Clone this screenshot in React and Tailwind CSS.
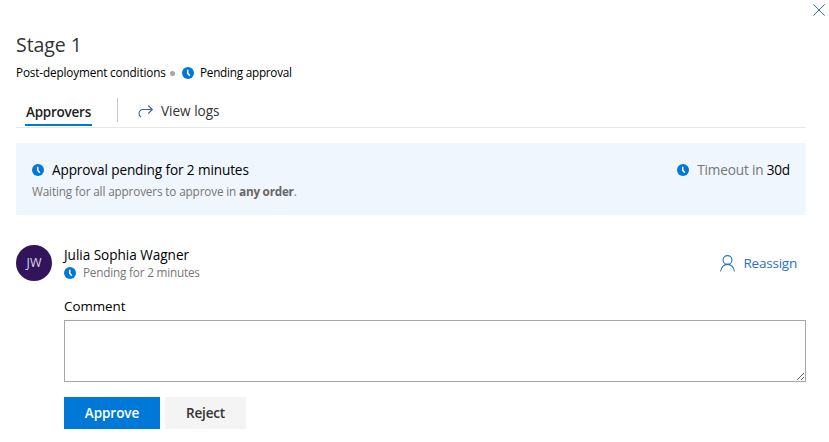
function Clock({ className = "" }) {
  return (
    <svg viewBox="0 0 12 12" className={`h-3 w-3 shrink-0 ${className}`} aria-hidden="true">
      <circle cx="6" cy="6" r="6" fill="#0078d7" />
      <path d="M5.7 2.7v3.5L7.8 8.7" fill="none" stroke="#fff" strokeWidth="1.5" />
    </svg>
  );
}

function CloseIcon() {
  return (
    <svg viewBox="0 0 12 12" className="h-3 w-3" fill="none" stroke="#2672c6" strokeWidth="1" aria-hidden="true">
      <path d="M.3.3l11.4 11.4M11.7.3L.3 11.7" />
    </svg>
  );
}

function ShareIcon() {
  return (
    <svg viewBox="0 0 16 14" className="h-3.5 w-4 shrink-0" fill="none" stroke="#35669b" strokeWidth="1.1" aria-hidden="true">
      <path d="M10.3 1.5l4 4-4 4M14 5.5H5a4 4 0 0 0-4 4c0 1.500.8 2.900 2.100 3.500" />
    </svg>
  );
}

function PersonIcon() {
  return (
    <svg viewBox="0 0 16 17" className="h-[17px] w-4 shrink-0" fill="none" stroke="#2672c6" strokeWidth="1.1" aria-hidden="true">
      <circle cx="8.5" cy="5" r="4.4" />
      <path d="M1.6 16.5c.4-4 3.200-7.100 6.900-7.100s6.500 3.100 6.900 7.100" />
    </svg>
  );
}

function Header() {
  return (
    <header>
      <h1 className="mt-3.5 h-7 text-[19.5px] leading-7 tracking-[-0.05px] text-[#333]">Stage 1</h1>
      <div className="mt-1.5 flex h-4 items-center text-[11.75px] leading-4 tracking-[-0.15px] text-black">
        <span className="-mt-0.5 w-[149px] whitespace-nowrap">Post-deployment conditions</span>
        <span className="ml-[5px] h-[5px] w-[5px] rounded-full bg-[#a6a6a6]" />
        <Clock className="ml-[7px]" />
        <span className="-mt-0.5 ml-1.5 tracking-[-0.25px]">Pending approval</span>
      </div>
    </header>
  );
}

function Tabs() {
  return (
    <nav className="mt-[17px] flex h-[30px] border-b border-[#e6e6e6] pl-[9px]">
      <button className="mt-[3px] h-[25px] w-[67px] whitespace-nowrap border-b-2 border-[#0078d7] text-[13.5px] font-semibold leading-[21px] tracking-[-0.25px] text-[#222]">
        Approvers
      </button>
      <div className="ml-[25px] h-6 w-px bg-[#c8c8c8]" />
      <button className="ml-5 mt-px flex h-6 items-center text-[13.6px] leading-6 tracking-[-0.02px] text-[#333]">
        <ShareIcon />
        <span className="ml-[7px]">View logs</span>
      </button>
    </nav>
  );
}

function Banner() {
  return (
    <section className="mt-[15px] flex h-[72px] justify-between bg-[#eff6fd] px-4 pt-[17px]">
      <div>
        <div className="flex h-5 items-center text-[13.6px] leading-5 text-black">
          <Clock />
          <span className="ml-2 tracking-[-0.12px]">Approval pending for 2 minutes</span>
        </div>
        <p className="mt-[3px] text-[11.75px] leading-4 tracking-[-0.15px] text-[#777]">
          Waiting for all approvers to approve in <b className="font-bold tracking-[-0.25px] text-[#666]">any order</b>.
        </p>
      </div>
      <div className="flex h-5 items-center text-[13.6px] leading-5 tracking-[-0.18px] text-[#777]">
        <Clock />
        <span className="-mt-px ml-2">
          Timeout in <span className="text-black">30d</span>
        </span>
      </div>
    </section>
  );
}

function Approval() {
  return (
    <section className="mt-[30px] flex">
      <div className="flex h-9 w-9 shrink-0 items-center justify-center rounded-full bg-[#32145a] pt-px text-[12.5px] text-[#ddd6e8]">
        JW
      </div>
      <div className="ml-3 flex-1">
        <div className="flex h-9 justify-between">
          <div>
            <div className="h-5 text-[13.6px] leading-5 tracking-[-0.04px] text-black">Julia Sophia Wagner</div>
            <div className="flex h-4 items-center text-[11.75px] leading-4 tracking-[-0.2px] text-[#777]">
              <Clock />
              <span className="-mt-0.5 ml-[7px]">Pending for 2 minutes</span>
            </div>
          </div>
          <button className="mr-[9px] flex items-center text-[13.5px] tracking-[-0.22px] text-[#2672c6]">
            <PersonIcon />
            <span className="ml-2 mt-px">Reassign</span>
          </button>
        </div>
        <label htmlFor="comment" className="mt-[15px] block h-5 text-[13.4px] leading-5 tracking-[-0.05px] text-black">
          Comment
        </label>
        <textarea id="comment" className="mt-1 block h-[62px] w-full resize-y border border-[#a6a6a6] bg-white outline-none" />
        <div className="mt-[15px] flex gap-[5px] text-[13.5px] font-semibold">
          <button className="h-8 w-24 bg-[#0078d7] pt-px tracking-[-0.05px] text-white">Approve</button>
          <button className="h-8 w-[81px] bg-[#f4f4f4] pt-px tracking-[-0.15px] text-[#333]">Reject</button>
        </div>
      </div>
    </section>
  );
}

export default function App() {
  return (
    <main className="h-[442px] overflow-hidden bg-white pl-4 font-['Open_Sans','Noto_Sans',sans-serif]">
      <div className="flex h-[17px] justify-end pr-1 pt-1">
        <button aria-label="Close" className="h-3 w-3">
          <CloseIcon />
        </button>
      </div>
      <div className="w-[790px]">
        <Header />
        <Tabs />
        <Banner />
        <Approval />
      </div>
    </main>
  );
}
